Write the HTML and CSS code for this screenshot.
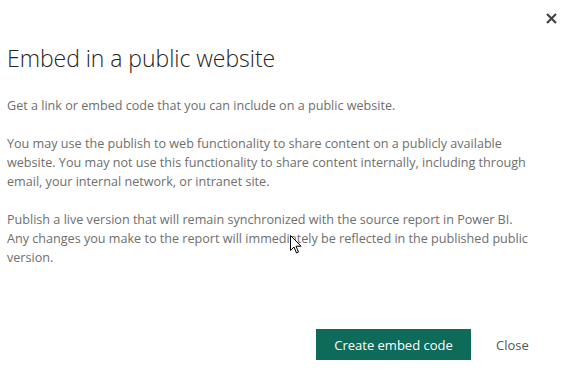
FILE: index.html
```html
<!DOCTYPE html>
<html lang="en">
<head>
  <meta charset="UTF-8" />
  <meta name="viewport" content="width=device-width, initial-scale=1.0"/>
  <title>Embed in a public website</title>
  <link rel="stylesheet" href="styles.css">
</head>
<body>

  <div class="dialog">
    <div class="close-row">
      <span class="close-x" title="Close">
        <svg width="11" height="11" viewBox="0 0 11 11"><path d="M1 1 L10 10 M10 1 L1 10" stroke="#444" stroke-width="2.2"/></svg>
      </span>
    </div>

    <h1>Embed in a public website</h1>

    <div class="body-text">
      <p>Get a link or embed code that you can include on a public website.</p>
      <p>You may use the publish to web functionality to share content on a publicly available website. You may not use this functionality to share content internally, including through email, your internal network, or intranet site.</p>
      <p>Publish a live version that will remain synchronized with the source report in Power BI. Any changes you make to the report will immediately be reflected in the published public version.</p>
    </div>

    <div class="actions">
      <button class="primary">Create embed code</button>
      <button class="link">Close</button>
    </div>

    <svg class="cursor" width="12" height="19" viewBox="0 0 12 19">
      <path d="M0.5 0.5 L0.5 15.5 L4 12 L6.5 18 L8.5 17 L6 11.2 L11 11.2 Z" fill="#fff" stroke="#000" stroke-width="1"/>
    </svg>
  </div>

</body>
</html>
```

FILE: styles.css
```css
body {
  margin: 0;
  padding: 0;
  background: #fff;
  font-family: "Open Sans", "Noto Sans", Arial, sans-serif;
}

.dialog {
  position: relative;
  width: 565px;
  height: 383px;
  box-sizing: border-box;
  padding: 0 0 0 7px;
}

.close-row {
  display: flex;
  justify-content: flex-end;
  padding: 13px 8px 0 0;
  height: 14px;
}

.close-x {
  display: block;
  width: 11px;
  height: 11px;
  cursor: pointer;
}

.close-x svg {
  display: block;
}

h1 {
  margin: 15px 0 0 0;
  font-size: 23px;
  font-weight: 300;
  color: #252423;
  line-height: 32px;
  letter-spacing: -0.05px;
}

.body-text {
  margin-top: 22px;
  width: 528px;
  color: #6e6e6e;
  font-size: 12.6px;
  line-height: 19px;
}

.body-text p {
  margin: 0 0 19px 0;
}

.actions {
  position: absolute;
  top: 329px;
  left: 316px;
  display: flex;
  align-items: center;
}

.actions button {
  font-family: inherit;
  font-size: 13px;
  border: none;
  cursor: pointer;
}

.primary {
  background-color: #0e6b5a;
  color: #fff;
  width: 155px;
  height: 31px;
}

.link {
  background: none;
  color: #555;
  margin-left: 15px;
  padding: 0 10px;
  height: 31px;
}

.cursor {
  position: absolute;
  left: 290px;
  top: 235px;
}
```
